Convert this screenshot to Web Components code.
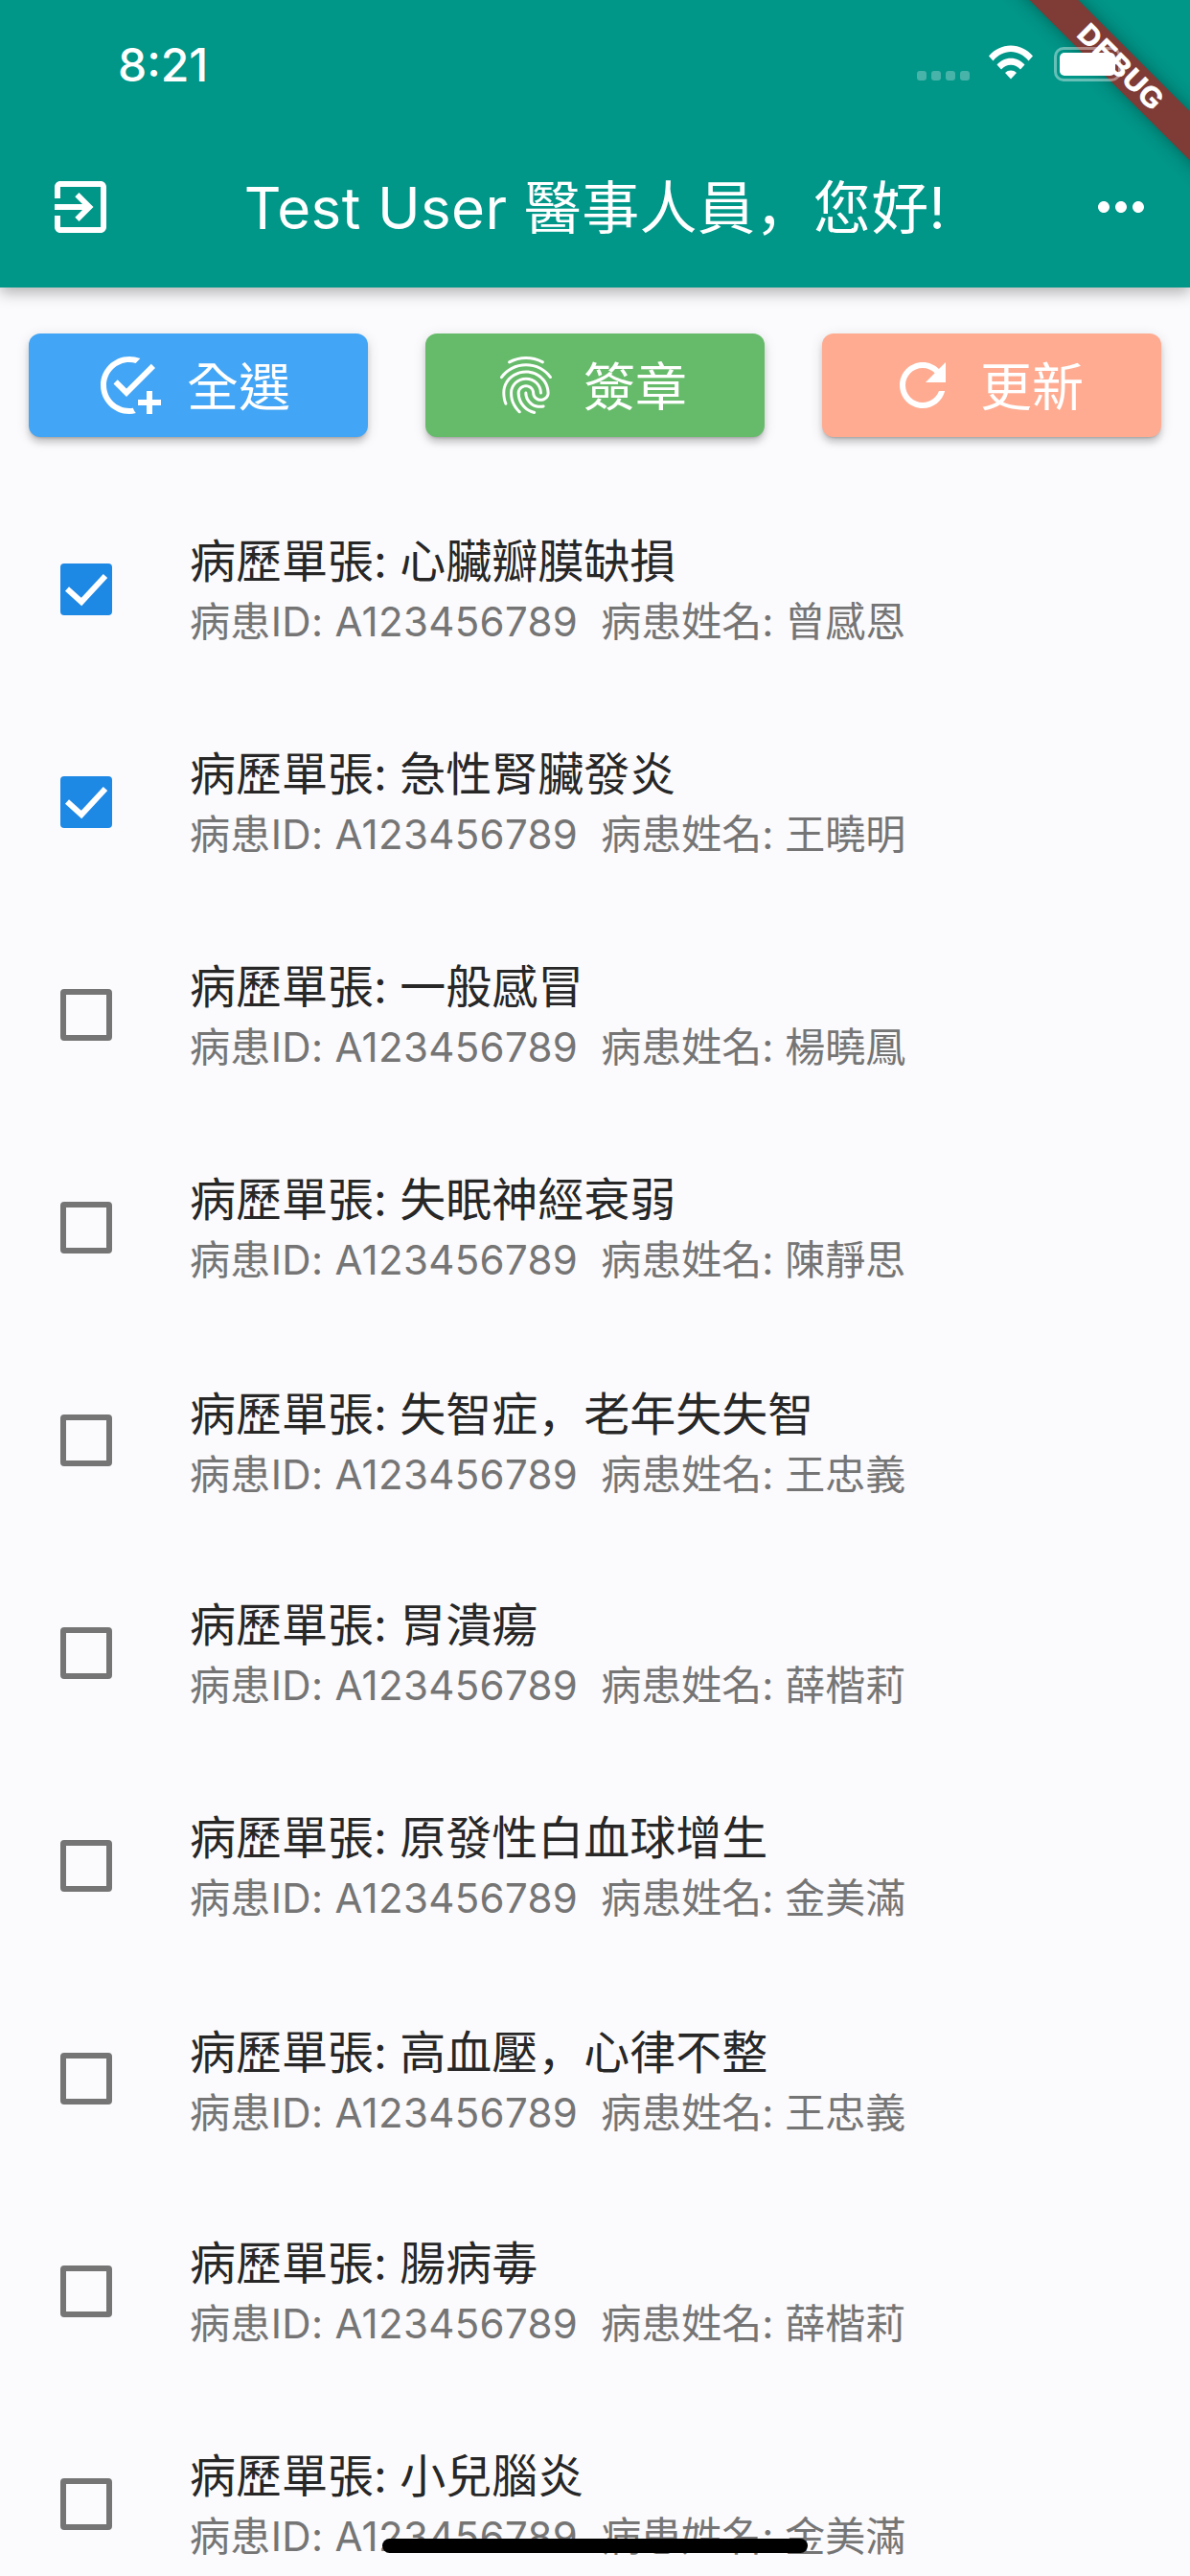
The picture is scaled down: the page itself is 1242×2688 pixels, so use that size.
<!DOCTYPE html>
<html lang="zh-Hant">
<head>
<meta charset="utf-8">
<title>Records</title>
<style>
  html, body { margin: 0; height: 100%; }
  body { font-family: Inter, "Noto Sans CJK TC", sans-serif; background: #fbfafc; overflow: hidden; }
</style>
</head>
<body>
<app-screen>
  <app-header slot="header" title="Test User 醫事人員，您好!"></app-header>
  <action-bar slot="actions">
    <action-button icon="selectAll" color="#42a5f5">全選</action-button>
    <action-button icon="fingerprint" color="#66bb6a">簽章</action-button>
    <action-button icon="refresh" color="#ffab91">更新</action-button>
  </action-bar>
  <record-row slot="list" checked title="心臟瓣膜缺損" name="曾感恩"></record-row>
  <record-row slot="list" checked title="急性腎臟發炎" name="王曉明"></record-row>
  <record-row slot="list" title="一般感冒" name="楊曉鳳"></record-row>
  <record-row slot="list" title="失眠神經衰弱" name="陳靜思"></record-row>
  <record-row slot="list" title="失智症，老年失失智" name="王忠義"></record-row>
  <record-row slot="list" title="胃潰瘍" name="薛楷莉"></record-row>
  <record-row slot="list" title="原發性白血球增生" name="金美滿"></record-row>
  <record-row slot="list" title="高血壓，心律不整" name="王忠義"></record-row>
  <record-row slot="list" title="腸病毒" name="薛楷莉"></record-row>
  <record-row slot="list" title="小兒腦炎" name="金美滿"></record-row>
</app-screen>

<script>
const ICONS = {
  exit: "M10.09 15.59L11.5 17l5-5-5-5-1.41 1.41L12.67 11H3v2h9.67l-2.58 2.59zM19 3H5c-1.11 0-2 .9-2 2v4h2V5h14v14H5v-4H3v4c0 1.1.89 2 2 2h14c1.1 0 2-.9 2-2V5c0-1.1-.9-2-2-2z",
  more: "M6 10c-1.1 0-2 .9-2 2s.9 2 2 2 2-.9 2-2-.9-2-2-2zm12 0c-1.1 0-2 .9-2 2s.9 2 2 2 2-.9 2-2-.9-2-2-2zm-6 0c-1.1 0-2 .9-2 2s.9 2 2 2 2-.9 2-2-.9-2-2-2z",
  selectAll: "M14.3 21.7C13.6 21.9 12.8 22 12 22C6.5 22 2 17.5 2 12S6.5 2 12 2C13.3 2 14.6 2.3 15.8 2.7L14.2 4.3C13.5 4.1 12.8 4 12 4C7.6 4 4 7.6 4 12S7.6 20 12 20C12.4 20 12.9 20 13.3 19.9C13.5 20.6 13.9 21.2 14.3 21.7M7.9 10.1L6.5 11.5L11 16L21 6L19.6 4.6L11 13.2L7.9 10.1M18 14V17H15V19H18V22H20V19H23V17H20V14H18Z",
  fingerprint: "M17.81 4.47c-.08 0-.16-.02-.23-.06C15.66 3.42 14 3 12.01 3c-1.98 0-3.86.47-5.57 1.41-.24.13-.54.04-.68-.2-.13-.24-.04-.55.2-.68C7.82 2.52 9.86 2 12.01 2c2.13 0 3.99.47 6.03 1.52.25.13.34.43.21.67-.09.18-.26.28-.44.28zM3.5 9.72c-.1 0-.2-.03-.29-.09-.23-.16-.28-.47-.12-.7.99-1.4 2.25-2.5 3.75-3.27C9.98 4.04 14 4.03 17.15 5.65c1.5.77 2.76 1.86 3.75 3.25.16.22.11.54-.12.7-.23.16-.54.11-.7-.12-.9-1.26-2.04-2.25-3.39-2.94-2.87-1.47-6.54-1.47-9.4.01-1.36.7-2.5 1.7-3.4 2.96-.08.14-.23.21-.39.21zm6.25 12.07c-.13 0-.26-.05-.35-.15-.87-.87-1.34-1.43-2.01-2.64-.69-1.23-1.05-2.73-1.05-4.34 0-2.97 2.54-5.39 5.66-5.39s5.66 2.42 5.66 5.39c0 .28-.22.5-.5.5s-.5-.22-.5-.5c0-2.42-2.09-4.39-4.66-4.39-2.57 0-4.66 1.97-4.66 4.39 0 1.44.32 2.77.93 3.85.64 1.15 1.08 1.64 1.85 2.42.19.2.19.51 0 .71-.11.1-.24.15-.37.15zm7.17-1.85c-1.19 0-2.24-.3-3.1-.89-1.49-1.01-2.38-2.65-2.38-4.39 0-.28.22-.5.5-.5s.5.22.5.5c0 1.41.72 2.74 1.94 3.56.71.48 1.54.71 2.54.71.24 0 .64-.03 1.04-.1.27-.05.53.13.58.41.05.27-.13.53-.41.58-.57.11-1.07.12-1.21.12zM14.91 22c-.04 0-.09-.01-.13-.02-1.59-.44-2.63-1.03-3.72-2.1-1.4-1.39-2.17-3.24-2.17-5.22 0-1.62 1.38-2.94 3.08-2.94 1.7 0 3.08 1.32 3.08 2.94 0 1.07.93 1.94 2.08 1.94s2.08-.87 2.08-1.94c0-3.77-3.25-6.83-7.25-6.83-2.84 0-5.44 1.58-6.61 4.03-.39.81-.59 1.76-.59 2.8 0 .78.07 2.01.67 3.61.1.26-.03.55-.29.64-.26.1-.55-.04-.64-.29-.49-1.31-.73-2.61-.73-3.96 0-1.2.23-2.29.68-3.24 1.33-2.79 4.28-4.6 7.51-4.6 4.55 0 8.25 3.51 8.25 7.83 0 1.62-1.38 2.94-3.08 2.94s-3.08-1.32-3.08-2.94c0-1.07-.93-1.94-2.08-1.94s-2.08.87-2.08 1.94c0 1.71.66 3.31 1.87 4.51.95.94 1.86 1.46 3.27 1.85.27.07.42.35.35.61-.05.23-.26.38-.47.38z",
  refresh: "M17.65 6.35C16.2 4.9 14.21 4 12 4c-4.42 0-7.99 3.58-7.99 8s3.57 8 7.99 8c3.73 0 6.84-2.55 7.73-6h-2.08c-.82 2.33-3.04 4-5.65 4-3.31 0-6-2.69-6-6s2.69-6 6-6c1.66 0 3.14.69 4.22 1.78L13 11h7V4l-2.35 2.35z"
};

function iconSvg(name) {
  return `<svg viewBox="0 0 24 24" width="72" height="72" fill="#fff"><path d="${ICONS[name]}"/></svg>`;
}

// the reference sets its full-width comma low on the left, the TC font centres it
function lowComma(text) {
  return text.replace(/，/g, `<span lang="zh-Hans" style="font-family:'Noto Sans CJK SC',sans-serif">，</span>`);
}

customElements.define("app-screen", class extends HTMLElement {
  constructor() {
    super();
    this.shadow = this.attachShadow({ mode: "open" });
  }

  connectedCallback() {
    this.shadow.innerHTML = `
      <style>
        :host { display: flex; flex-direction: column; position: relative; width: 1242px; height: 2688px; overflow: hidden; background: #fbfafc; }
        .home { position: absolute; left: 399px; top: 2649px; width: 444px; height: 15px; border-radius: 8px; background: #000; z-index: 3; }
        .list { display: block; padding-top: 48px; }
      </style>
      <slot name="header"></slot>
      <slot name="actions"></slot>
      <div class="list"><slot name="list"></slot></div>
      <div class="home"></div>
    `;
  }
});

customElements.define("status-bar", class extends HTMLElement {
  constructor() {
    super();
    this.shadow = this.attachShadow({ mode: "open" });
  }

  connectedCallback() {
    this.shadow.innerHTML = `
      <style>
        :host { display: flex; align-items: center; box-sizing: border-box; height: 132px; padding: 0 72px 0 123px; color: #fff; }
        .time { font-size: 48px; font-weight: 500; line-height: 132px; flex: 1; margin-top: 4px; }
        .dots { display: flex; gap: 5px; margin-top: 26px; opacity: .28; }
        .dots i { width: 10px; height: 10px; border-radius: 3px; background: #fff; }
        .wifi { margin: -2px 22px 0 20px; display: block; }
        .battery { box-sizing: border-box; position: relative; z-index: 2; width: 70px; height: 36px; margin-top: 2px; padding: 3px; border: 3px solid rgba(255,255,255,.4); border-radius: 10px; margin-right: 0; }
        .battery b { display: block; height: 100%; border-radius: 5px; background: #fff; }
      </style>
      <div class="time">8:21</div>
      <div class="dots"><i></i><i></i><i></i><i></i></div>
      <svg class="wifi" width="46" height="36" viewBox="0 0 46 36" fill="#fff">
        <path d="M0 11.5C6 4.5 14 .5 23 .5s17 4 23 11l-4.500 5C36.500 10.500 30 7 23 7S9.500 10.500 4.500 16.500z"/>
        <path d="M8.500 20.500C12.300 16.300 17.400 13.800 23 13.800s10.700 2.500 14.500 6.700l-4.500 5c-2.700-3-6-4.800-10-4.800s-7.300 1.800-10 4.800z"/>
        <path d="M17 29c1.700-1.700 3.700-2.500 6-2.500s4.300.8 6 2.500l-6 6.500z"/>
      </svg>
      <div class="battery"><b></b></div>
    `;
  }
});

customElements.define("debug-banner", class extends HTMLElement {
  constructor() {
    super();
    this.shadow = this.attachShadow({ mode: "open" });
  }

  connectedCallback() {
    this.shadow.innerHTML = `
      <style>
        :host { display: block; position: absolute; top: 0; right: 0; width: 232px; height: 232px; overflow: hidden; pointer-events: none; }
        .strip { position: absolute; left: 10px; top: 52px; width: 300px; height: 36px; transform: rotate(45deg); background: #7f3b35; box-shadow: 0 0 18px rgba(0,0,0,.35);
          display: flex; align-items: center; justify-content: center; color: #fff; font: 900 30px/36px "Liberation Sans", sans-serif; letter-spacing: 1px; -webkit-text-stroke: .8px #fff; }
      </style>
      <div class="strip">DEBUG</div>
    `;
  }
});

customElements.define("app-header", class extends HTMLElement {
  constructor() {
    super();
    this.shadow = this.attachShadow({ mode: "open" });
  }

  connectedCallback() {
    this.shadow.innerHTML = `
      <style>
        :host { display: block; position: relative; z-index: 1; background: #009688; box-shadow: 0 6px 14px rgba(0,0,0,.28); color: #fff; }
        .bar { display: flex; align-items: center; height: 168px; padding: 0 36px 0 48px; }
        h1 { flex: 1; margin: -3px 0 0; padding-right: 12px; text-align: center; font-size: 60px; font-weight: 400; line-height: 72px; letter-spacing: .4px; white-space: nowrap; }
        svg { display: block; flex: none; }
        .side { width: 72px; }
      </style>
      <debug-banner></debug-banner>
      <status-bar></status-bar>
      <div class="bar">
        <div class="side">${iconSvg("exit")}</div>
        <h1>${lowComma(this.getAttribute("title"))}</h1>
        <div class="side">${iconSvg("more")}</div>
      </div>
    `;
  }
});

customElements.define("action-bar", class extends HTMLElement {
  constructor() {
    super();
    this.shadow = this.attachShadow({ mode: "open" });
  }

  connectedCallback() {
    this.shadow.innerHTML = `
      <style>
        :host { display: flex; justify-content: space-between; padding: 48px 30px 0; }
      </style>
      <slot></slot>
    `;
  }
});

customElements.define("action-button", class extends HTMLElement {
  constructor() {
    super();
    this.shadow = this.attachShadow({ mode: "open" });
  }

  connectedCallback() {
    this.shadow.innerHTML = `
      <style>
        :host { display: flex; align-items: center; gap: 24px; box-sizing: border-box; width: 354px; height: 108px; padding-left: 69px; border-radius: 12px;
          background: ${this.getAttribute("color")}; color: #fff; font-size: 54px; box-shadow: 0 3px 3px -2px rgba(0,0,0,.2), 0 6px 6px rgba(0,0,0,.14), 0 3px 14px rgba(0,0,0,.12); }
        svg { display: block; flex: none; }
        .label { margin-bottom: 3px; }
      </style>
      ${iconSvg(this.getAttribute("icon"))}
      <span class="label"><slot></slot></span>
    `;
  }
});

customElements.define("check-box", class extends HTMLElement {
  constructor() {
    super();
    this.shadow = this.attachShadow({ mode: "open" });
  }

  connectedCallback() {
    const on = this.hasAttribute("checked");
    this.shadow.innerHTML = `
      <style>
        :host { display: block; box-sizing: border-box; flex: none; width: 54px; height: 54px; border-radius: 4px;
          ${on ? "background: #1e88e5;" : "border: 6px solid #757575;"} }
        svg { display: block; }
      </style>
      ${on ? `<svg width="54" height="54" viewBox="0 0 54 54"><path d="M7 26.500L22 40L47 13" fill="none" stroke="#fff" stroke-width="6"/></svg>` : ""}
    `;
  }
});

customElements.define("record-row", class extends HTMLElement {
  constructor() {
    super();
    this.shadow = this.attachShadow({ mode: "open" });
  }

  connectedCallback() {
    this.shadow.innerHTML = `
      <style>
        :host { display: flex; align-items: center; gap: 81px; box-sizing: border-box; height: 222px; padding-left: 63px; }
        .text { padding-top: 4px; }
        .title { font-size: 48px; line-height: 62px; color: rgba(0,0,0,.87); white-space: nowrap; }
        .sub { display: flex; gap: 24px; font-size: 42px; line-height: 62px; margin-top: 1px; color: #757575; letter-spacing: .35px; white-space: nowrap; }
        .sub span + span { letter-spacing: 0; }
      </style>
      <check-box ${this.hasAttribute("checked") ? "checked" : ""}></check-box>
      <div class="text">
        <div class="title">病歷單張: ${lowComma(this.getAttribute("title"))}</div>
        <div class="sub"><span>病患ID: A123456789</span><span>病患姓名: ${this.getAttribute("name")}</span></div>
      </div>
    `;
  }
});
</script>
</body>
</html>
